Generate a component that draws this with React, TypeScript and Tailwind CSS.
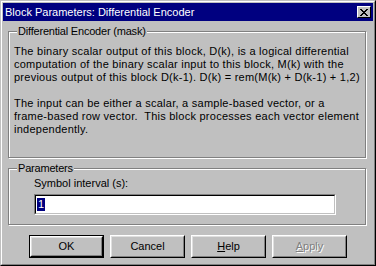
import React from 'react';

const font = { fontFamily: '"Liberation Sans", Arial, sans-serif' };

const GroupBox: React.FC<{ label: string; className?: string; children: React.ReactNode }> = ({ label, className, children }) => (
  <div className={`relative border border-[#808080] shadow-[inset_1px_1px_#fff,1px_1px_#fff] ${className ?? ''}`}>
    <span className="absolute left-[8px] top-[-7px] bg-[#c0c0c0] px-[1px] text-[11px] leading-[13px] tracking-[-0.2px] text-black">{label}</span>
    {children}
  </div>
);

const Button: React.FC<{ children: React.ReactNode; isDefault?: boolean; disabled?: boolean }> = ({ children, isDefault, disabled }) => (
  <div className={`w-[75px] h-[23px] ${isDefault ? 'border border-black' : ''}`}>
    <div className="h-full border border-t-white border-l-white border-r-black border-b-black">
      <div
        className={`h-full flex items-center justify-center border border-t-[#dfdfdf] border-l-[#dfdfdf] border-r-[#808080] border-b-[#808080] text-[11px] ${
          disabled ? 'text-[#808080] [text-shadow:1px_1px_#fff]' : 'text-black'
        }`}
      >
        {children}
      </div>
    </div>
  </div>
);

export default function App() {
  return (
    <div className="w-[376px] h-[266px] bg-[#c0c0c0] select-none" style={font}>
      <div className="h-full border border-t-[#c0c0c0] border-l-[#c0c0c0] border-r-black border-b-black">
        <div className="h-full border border-t-white border-l-white border-r-[#808080] border-b-[#808080] p-[1px] flex flex-col">
          {/* title bar */}
          <div className="h-[18px] bg-[#000080] flex items-center pl-[2px] pr-[2px]">
            <span className="text-white text-[11px] leading-[14px] flex-1">Block Parameters: Differential Encoder</span>
            <div className="w-[14px] h-[12px] bg-[#c0c0c0] border border-t-white border-l-white border-r-black border-b-black flex items-center justify-center">
              <svg width="8" height="7" viewBox="0 0 8 7">
                <path d="M0 0h2v1h1v1h2V1h1V0h2v1H7v1H6v1H5v1h1v1h1v1h1v1H6V6H5V5H3v1H2v1H0V6h1V5h1V4h1V3H2V2H1V1H0z" fill="black" />
              </svg>
            </div>
          </div>

          <div className="pl-[5px] pt-[10px] flex flex-col">
            <GroupBox label="Differential Encoder (mask)" className="w-[358px] h-[127px]">
              <div className="pl-[5px] pt-[13px] text-[11px] leading-[13px] tracking-[0.25px] text-black">
                <p>
                  The binary scalar output of this block, D(k), is a logical differential
                  <br />
                  computation of the binary scalar input to this block, M(k) with the
                  <br />
                  previous output of this block D(k-1). D(k) = rem(M(k) + D(k-1) + 1,2)
                </p>
                <p className="mt-[13px]">
                  The input can be either a scalar, a sample-based vector, or a
                  <br />
                  frame-based row vector.&nbsp; This block processes each vector element
                  <br />
                  independently.
                </p>
              </div>
            </GroupBox>

            <GroupBox label="Parameters" className="mt-[10px] w-[358px] h-[57px]">
              <div className="pl-[25px] pt-[8px] text-[11px] leading-[13px] text-black">
                <div>Symbol interval (s):</div>
                <div className="mt-[4px] w-[302px] h-[21px] border border-t-[#808080] border-l-[#808080] border-r-white border-b-white">
                  <div className="h-full bg-white border border-t-black border-l-black border-r-[#c0c0c0] border-b-[#c0c0c0] flex items-center pl-[1px]">
                    <span className="bg-[#000080] text-white px-[1px] leading-[13px]">1</span>
                  </div>
                </div>
              </div>
            </GroupBox>

            <div className="mt-[10px] pl-[21px] flex gap-[6px]">
              <Button isDefault>OK</Button>
              <Button>Cancel</Button>
              <Button>
                <span>
                  <span className="underline">H</span>elp
                </span>
              </Button>
              <Button disabled>
                <span>
                  <span className="underline">A</span>pply
                </span>
              </Button>
            </div>
          </div>
        </div>
      </div>
    </div>
  );
}
